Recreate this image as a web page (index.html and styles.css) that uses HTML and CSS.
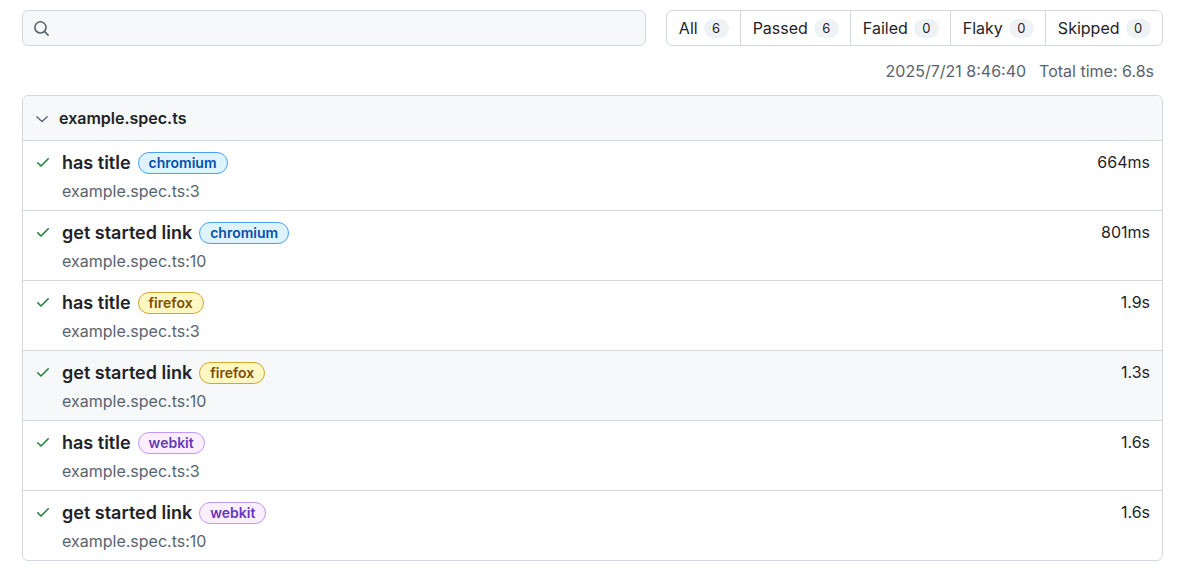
FILE: index.html
```html
<!DOCTYPE html>
<html>
<head>
<meta charset="utf-8">
<link rel="stylesheet" href="styles.css">
</head>
<body>
<div class="report">
  <div class="top">
    <div class="search">
      <svg class="search-icon" viewBox="0 0 16 16" width="16" height="16"><path fill="#59636e" d="M10.68 11.74a6 6 0 0 1-7.922-8.982 6 6 0 0 1 8.982 7.922l3.04 3.04a.749.749 0 0 1-.326 1.275.749.749 0 0 1-.734-.215ZM11.5 7a4.499 4.499 0 1 0-8.997 0A4.499 4.499 0 0 0 11.5 7Z"/></svg>
    </div>
    <div class="filters">
      <div class="filter">All <span class="count">6</span></div>
      <div class="filter">Passed <span class="count">6</span></div>
      <div class="filter">Failed <span class="count">0</span></div>
      <div class="filter">Flaky <span class="count">0</span></div>
      <div class="filter">Skipped <span class="count">0</span></div>
    </div>
  </div>
  <div class="meta">
    <span>2025/7/21 8:46:40</span>
    <span>Total time: 6.8s</span>
  </div>
  <div class="file">
    <div class="file-head">
      <svg class="chev" viewBox="0 0 16 16" width="16" height="16"><path fill="none" stroke="#59636e" stroke-width="1.3" stroke-linecap="round" stroke-linejoin="round" d="M2.8 5.8 8 10.6 13.2 5.8"/></svg>
      <span class="file-name">example.spec.ts</span>
    </div>
    <div class="row">
      <svg class="check" viewBox="0 0 16 16" width="16" height="16"><path fill="#1a7f37" d="M13.78 4.22a.75.75 0 0 1 0 1.06l-7.25 7.25a.75.75 0 0 1-1.06 0L2.22 9.28a.751.751 0 0 1 .018-1.042.751.751 0 0 1 1.042-.018L6 10.94l6.72-6.72a.75.75 0 0 1 1.06 0Z"/></svg>
      <div class="row-body">
        <div class="row-line"><span class="title">has title</span><span class="badge chromium">chromium</span><span class="dur">664ms</span></div>
        <div class="loc">example.spec.ts:3</div>
      </div>
    </div>
    <div class="row">
      <svg class="check" viewBox="0 0 16 16" width="16" height="16"><path fill="#1a7f37" d="M13.78 4.22a.75.75 0 0 1 0 1.06l-7.25 7.25a.75.75 0 0 1-1.06 0L2.22 9.28a.751.751 0 0 1 .018-1.042.751.751 0 0 1 1.042-.018L6 10.94l6.72-6.72a.75.75 0 0 1 1.06 0Z"/></svg>
      <div class="row-body">
        <div class="row-line"><span class="title">get started link</span><span class="badge chromium">chromium</span><span class="dur">801ms</span></div>
        <div class="loc">example.spec.ts:10</div>
      </div>
    </div>
    <div class="row">
      <svg class="check" viewBox="0 0 16 16" width="16" height="16"><path fill="#1a7f37" d="M13.78 4.22a.75.75 0 0 1 0 1.06l-7.25 7.25a.75.75 0 0 1-1.06 0L2.22 9.28a.751.751 0 0 1 .018-1.042.751.751 0 0 1 1.042-.018L6 10.94l6.72-6.72a.75.75 0 0 1 1.06 0Z"/></svg>
      <div class="row-body">
        <div class="row-line"><span class="title">has title</span><span class="badge firefox">firefox</span><span class="dur">1.9s</span></div>
        <div class="loc">example.spec.ts:3</div>
      </div>
    </div>
    <div class="row selected">
      <svg class="check" viewBox="0 0 16 16" width="16" height="16"><path fill="#1a7f37" d="M13.78 4.22a.75.75 0 0 1 0 1.06l-7.25 7.25a.75.75 0 0 1-1.06 0L2.22 9.28a.751.751 0 0 1 .018-1.042.751.751 0 0 1 1.042-.018L6 10.94l6.72-6.72a.75.75 0 0 1 1.06 0Z"/></svg>
      <div class="row-body">
        <div class="row-line"><span class="title">get started link</span><span class="badge firefox">firefox</span><span class="dur">1.3s</span></div>
        <div class="loc">example.spec.ts:10</div>
      </div>
    </div>
    <div class="row">
      <svg class="check" viewBox="0 0 16 16" width="16" height="16"><path fill="#1a7f37" d="M13.78 4.22a.75.75 0 0 1 0 1.06l-7.25 7.25a.75.75 0 0 1-1.06 0L2.22 9.28a.751.751 0 0 1 .018-1.042.751.751 0 0 1 1.042-.018L6 10.94l6.72-6.72a.75.75 0 0 1 1.06 0Z"/></svg>
      <div class="row-body">
        <div class="row-line"><span class="title">has title</span><span class="badge webkit">webkit</span><span class="dur">1.6s</span></div>
        <div class="loc">example.spec.ts:3</div>
      </div>
    </div>
    <div class="row">
      <svg class="check" viewBox="0 0 16 16" width="16" height="16"><path fill="#1a7f37" d="M13.78 4.22a.75.75 0 0 1 0 1.06l-7.25 7.25a.75.75 0 0 1-1.06 0L2.22 9.28a.751.751 0 0 1 .018-1.042.751.751 0 0 1 1.042-.018L6 10.94l6.72-6.72a.75.75 0 0 1 1.06 0Z"/></svg>
      <div class="row-body">
        <div class="row-line"><span class="title">get started link</span><span class="badge webkit">webkit</span><span class="dur">1.6s</span></div>
        <div class="loc">example.spec.ts:10</div>
      </div>
    </div>
  </div>
</div>
</body>
</html>
```

FILE: styles.css
```css
html, body {
  margin: 0;
  padding: 0;
  background: #ffffff;
}
body {
  font-family: Inter, "Noto Sans", "Liberation Sans", sans-serif;
  color: #1f2328;
  font-size: 16px;
}
.report {
  width: 1141px;
  padding: 10px 0 0 22px;
}
.top {
  display: flex;
  gap: 20px;
  height: 36px;
}
.search {
  flex: 1;
  box-sizing: border-box;
  height: 36px;
  background: #f6f8fa;
  border: 1px solid #d1d9e0;
  border-radius: 6px;
  display: flex;
  align-items: center;
  padding-left: 10px;
}
.search-icon {
  width: 17px;
  height: 17px;
}
.filters {
  display: flex;
  box-sizing: border-box;
  height: 36px;
  border: 1px solid #d1d9e0;
  border-radius: 6px;
  overflow: hidden;
}
.filter {
  display: flex;
  align-items: center;
  gap: 6px;
  padding: 0 11.5px;
  border-left: 1px solid #d1d9e0;
  font-size: 16px;
  color: #1f2328;
}
.filter:first-child {
  border-left: none;
  padding-left: 12px;
}
.count {
  display: inline-flex;
  align-items: center;
  justify-content: center;
  min-width: 25px;
  height: 19px;
  border-radius: 10px;
  background: #eff2f5;
  font-size: 13px;
  padding: 0 1px;
  box-sizing: border-box;
}
.meta {
  display: flex;
  justify-content: flex-end;
  gap: 13px;
  margin: 13px 0 12px;
  padding-right: 9px;
  line-height: 24px;
  color: #59636e;
  font-size: 16px;
}
.file {
  border: 1px solid #d1d9e0;
  border-radius: 6px;
  overflow: hidden;
}
.file-head {
  display: flex;
  align-items: center;
  height: 44px;
  background: #f6f8fa;
  padding-left: 11px;
  gap: 9px;
}
.chev {
  width: 16px;
  height: 16px;
  margin-top: 1px;
}
.file-name {
  font-size: 16px;
  font-weight: 600;
  color: #1f2328;
}
.row {
  display: flex;
  border-top: 1px solid #d1d9e0;
  padding: 9px 12px 7px 12px;
  gap: 11px;
}
.row.selected {
  background: #f6f8fa;
}
.check {
  width: 16px;
  height: 16px;
  margin-top: 4px;
  flex: none;
}
.row-body {
  flex: 1;
}
.row-line {
  display: flex;
  align-items: center;
  height: 24px;
}
.title {
  font-size: 18px;
  font-weight: 600;
  color: #1f2328;
}
.badge {
  display: inline-flex;
  align-items: center;
  height: 22px;
  box-sizing: border-box;
  padding: 0 10px;
  margin-left: 7px;
  border-radius: 12px;
  border: 1px solid;
  font-size: 14px;
  font-weight: 600;
  margin-top: 1px;
}
.chromium {
  background: #ddf4ff;
  border-color: #4c9ff5;
  color: #0550ae;
}
.firefox {
  background: #fff8c5;
  border-color: #d4a72c;
  color: #7d4e00;
}
.webkit {
  background: #fbefff;
  border-color: #c297ff;
  color: #6639ba;
}
.dur {
  margin-left: auto;
  font-size: 16px;
  color: #1f2328;
}
.loc {
  margin-top: 5px;
  line-height: 24px;
  height: 24px;
  font-size: 16px;
  color: #59636e;
}
```
